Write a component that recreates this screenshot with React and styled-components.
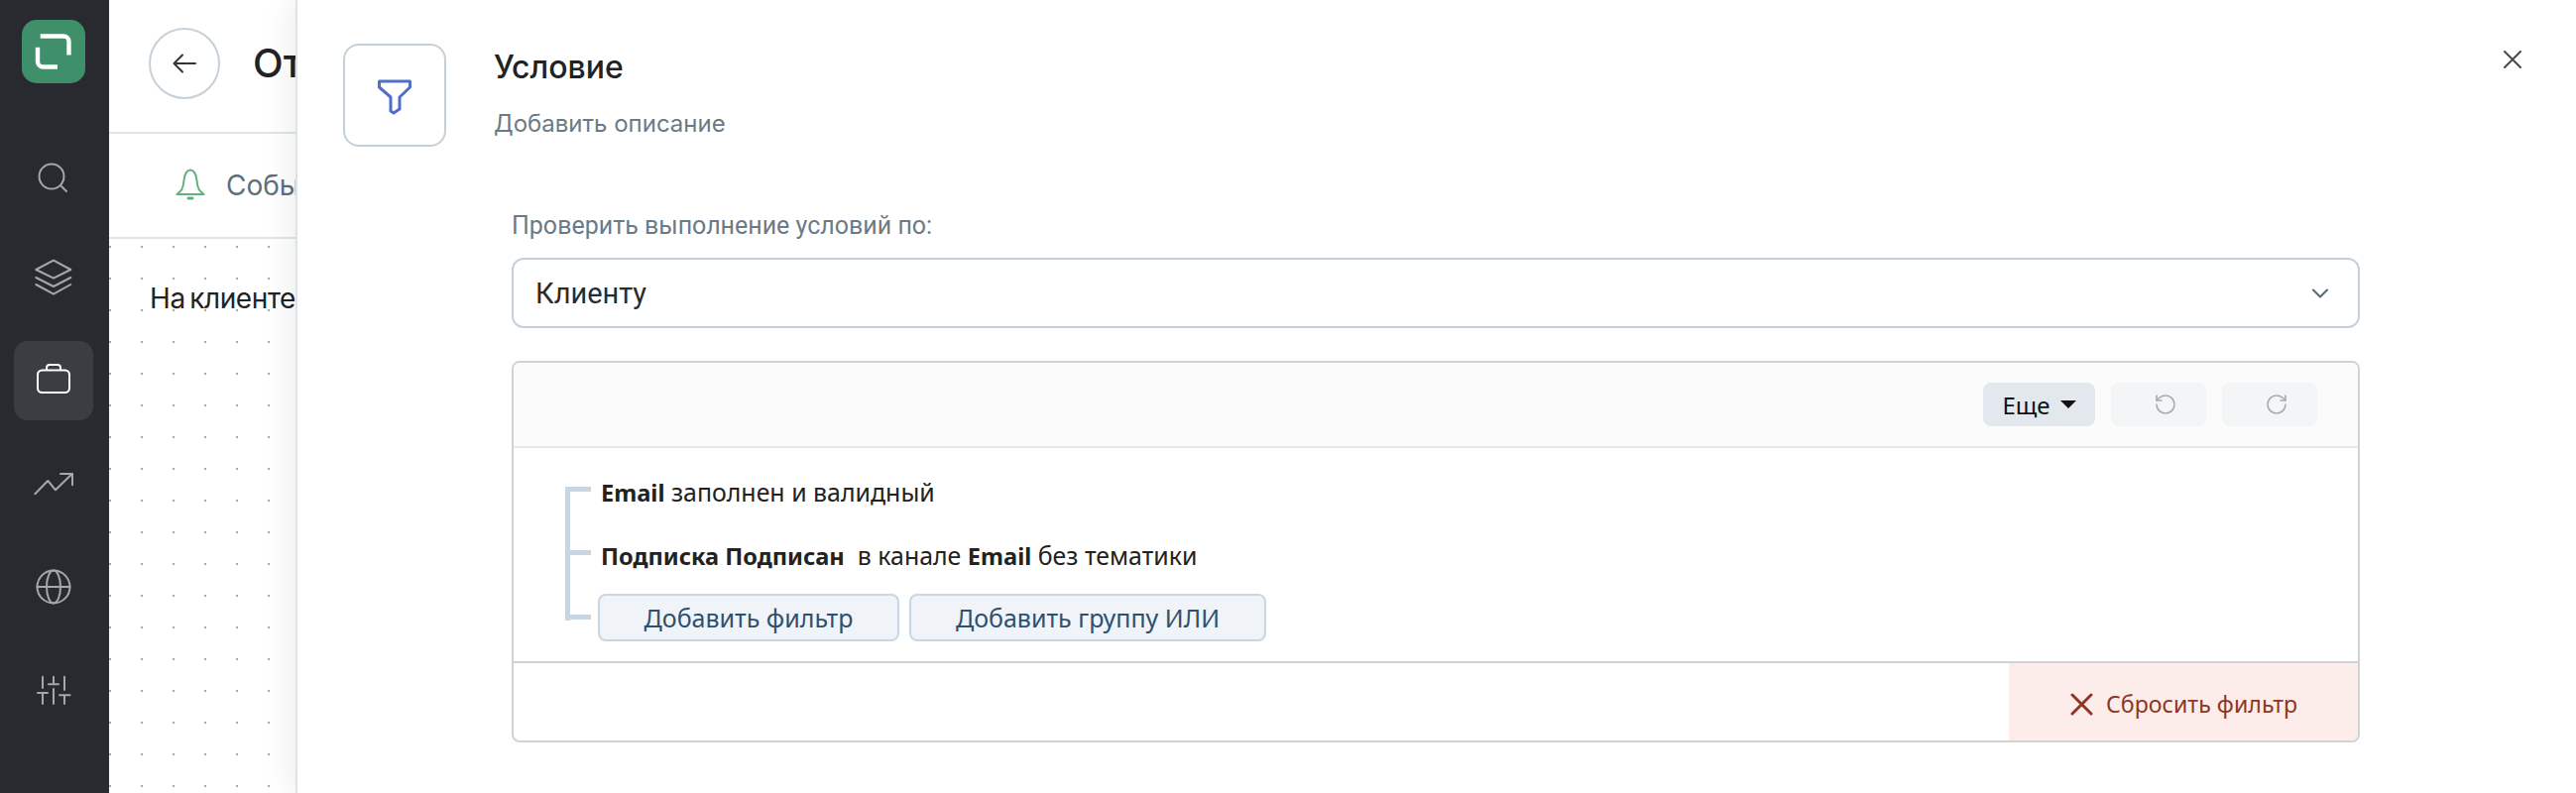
import React from 'react'
import styled, { createGlobalStyle } from 'styled-components'
import { ChevronDown, RotateCcw, RotateCw } from 'lucide-react'

const GlobalStyle = createGlobalStyle`
  html, body {
    margin: 0;
    height: 100%;
    overflow: hidden;
    background: #fff;
    font-family: Inter, "Noto Sans", sans-serif;
  }
`

const Shell = styled.div`
  position: relative;
  display: flex;
  width: 2598px;
  height: 800px;
  overflow: hidden;
`

const Sidebar = styled.nav`
  flex: none;
  width: 110px;
  padding: 20px 2px 0 0;
  background: #282a2f;
  display: flex;
  flex-direction: column;
  align-items: center;
  box-sizing: border-box;
`

const Logo = styled.div`
  width: 64px;
  height: 64px;
  margin-bottom: 52px;
  border-radius: 15px;
  background: #3f8f6b;
  display: flex;
`

const NavList = styled.div`
  display: flex;
  flex-direction: column;
  gap: 24px;
`

const NavItem = styled.div`
  width: 80px;
  height: 80px;
  border-radius: 14px;
  display: flex;
  align-items: center;
  justify-content: center;
  color: ${(p) => (p.$active ? '#ffffff' : '#a5a7aa')};
  background: ${(p) => (p.$active ? '#3a3d42' : 'transparent')};
`

const Page = styled.main`
  flex: 1;
  display: flex;
  flex-direction: column;
`

const PageHeader = styled.header`
  height: 127px;
  padding: 0 0 6px 40px;
  display: flex;
  align-items: center;
  gap: 33px;
  border-bottom: 2px solid #dde4e8;
`

const BackButton = styled.div`
  width: 72px;
  height: 72px;
  border-radius: 50%;
  border: 2px solid #c5d0d8;
  box-sizing: border-box;
  display: flex;
  align-items: center;
  justify-content: center;
  color: #333;
`

const PageTitle = styled.h1`
  margin: 0;
  font-size: 40px;
  font-weight: 500;
  color: #222;
  white-space: nowrap;
`

const Tabs = styled.div`
  height: 104px;
  padding-left: 62px;
  display: flex;
  align-items: center;
  gap: 16px;
  border-bottom: 2px solid #dde4e8;
`

const TabLabel = styled.span`
  font-size: 28px;
  color: #5f6f7a;
`

const Canvas = styled.section`
  flex: 1;
  padding: 43px 0 0 41px;
  font-size: 28px;
  letter-spacing: -0.4px;
  word-spacing: -3px;
  color: #222;
  background-image: radial-gradient(circle at 1px 1px, #a8a8a8 1px, transparent 1.3px);
  background-size: 32px 32px;
  background-position: 0 7px;
`

const Drawer = styled.aside`
  position: absolute;
  top: 0;
  left: 298px;
  right: 0;
  bottom: 0;
  background: #fff;
  border-left: 2px solid #dde4e8;
  box-shadow: -6px 0 28px rgba(0, 0, 0, 0.07);
  display: flex;
  flex-direction: column;
`

const DrawerHeader = styled.div`
  padding: 44px 0 0 46px;
  display: flex;
  gap: 48px;
`

const FilterBox = styled.div`
  width: 104px;
  height: 104px;
  padding-top: 3px;
  border: 2px solid #c5d0d8;
  border-radius: 16px;
  box-sizing: border-box;
  display: flex;
  align-items: center;
  justify-content: center;
`

const HeaderText = styled.div`
  display: flex;
  flex-direction: column;
`

const DrawerTitle = styled.h2`
  margin: 4px 0 0;
  font-size: 32px;
  line-height: 40px;
  font-weight: 500;
  color: #222;
`

const DrawerSubtitle = styled.p`
  margin: 22px 0 0;
  font-size: 24px;
  line-height: 30px;
  color: #6b7a85;
`

const CloseButton = styled.div`
  position: absolute;
  top: 50px;
  left: 2224px;
  color: #4a4a4e;
  display: flex;
`

const DrawerBody = styled.div`
  padding: 66px 218px 0 216px;
  display: flex;
  flex-direction: column;
`

const FieldLabel = styled.label`
  font-family: Roboto, sans-serif;
  font-size: 25px;
  line-height: 28px;
  color: #6b7a85;
`

const SelectBox = styled.div`
  margin-top: 18px;
  height: 71px;
  box-sizing: border-box;
  padding: 0 24px 0 22px;
  border: 2px solid #c5d0d8;
  border-radius: 12px;
  display: flex;
  align-items: center;
  justify-content: space-between;
  font-family: Roboto, sans-serif;
  font-size: 29px;
  color: #2b2b2b;

  svg {
    color: #5a6a75;
  }
`

const Builder = styled.div`
  margin-top: 33px;
  height: 385px;
  box-sizing: border-box;
  border: 2px solid #d2d2d2;
  border-radius: 8px;
  display: flex;
  flex-direction: column;
  overflow: hidden;
`

const BuilderToolbar = styled.div`
  height: 86px;
  flex: none;
  box-sizing: border-box;
  padding: 0 41px 0 0;
  background: #fbfbfb;
  border-bottom: 2px solid #e3e8ec;
  display: flex;
  align-items: center;
  justify-content: flex-end;
  gap: 16px;
`

const MoreButton = styled.div`
  width: 113px;
  height: 44px;
  border-radius: 8px;
  background: #e2e8ee;
  display: flex;
  align-items: center;
  justify-content: center;
  gap: 10px;
  font-family: "Noto Sans", sans-serif;
  font-size: 24px;
  color: #111;
`

const Caret = styled.span`
  width: 0;
  height: 0;
  border-left: 8px solid transparent;
  border-right: 8px solid transparent;
  border-top: 8px solid #111;
`

const HistoryButton = styled.div`
  width: 96px;
  height: 44px;
  padding-left: 14px;
  box-sizing: border-box;
  border-radius: 8px;
  background: #f3f5f6;
  display: flex;
  align-items: center;
  justify-content: center;
  color: #a9a9a9;
`

const Tree = styled.div`
  flex: 1;
  padding: 10px 0 11px 52px;
  font-family: "Noto Sans", sans-serif;
  font-size: 24.9px;
  color: #222;
`

const TreeRow = styled.div`
  height: ${(p) => (p.$tall ? 66 : 64)}px;
  display: flex;
  align-items: center;
`

const Connector = styled.span`
  position: relative;
  flex: none;
  align-self: stretch;
  width: 26px;

  &::before {
    content: '';
    position: absolute;
    left: 0;
    width: 5px;
    top: ${(p) => (p.$first ? 'calc(50% - 3px)' : '0')};
    bottom: ${(p) => (p.$last ? 'calc(50% - 3px)' : '0')};
    background: #c8d6e4;
  }

  &::after {
    content: '';
    position: absolute;
    left: 0;
    right: 0;
    top: calc(50% - 3px);
    height: 5px;
    background: #c8d6e4;
  }
`

const RuleText = styled.div`
  margin: 4px 0 0 10px;
  white-space: pre;

  b {
    font-size: 23.6px;
    font-weight: 700;
  }
`

const AddButtons = styled.div`
  margin-left: 7px;
  display: flex;
  gap: 10px;
`

const AddButton = styled.div`
  width: ${(p) => p.$width}px;
  height: 48px;
  box-sizing: border-box;
  border: 2px solid #c9d6e3;
  border-radius: 8px;
  background: #f0f4f8;
  display: flex;
  align-items: center;
  justify-content: center;
  font-size: 25px;
  color: #2f5070;
`

const BuilderFooter = styled.div`
  height: 79px;
  flex: none;
  border-top: 2px solid #d2d2d2;
  display: flex;
  justify-content: flex-end;
  font-family: "Noto Sans", sans-serif;
`

const ResetButton = styled.div`
  width: 352px;
  padding-top: 2px;
  box-sizing: border-box;
  background: #fcedea;
  color: #8f3524;
  font-size: 23.2px;
  display: flex;
  align-items: center;
  justify-content: center;
  gap: 13px;
`

const Icon = ({ children, size = 40, sw = 2, color = 'currentColor', vb = 40 }) => (
  <svg width={size} height={size} viewBox={`0 0 ${vb} ${vb}`} fill="none" stroke={color} strokeWidth={sw} strokeLinecap="round" strokeLinejoin="round">
    {children}
  </svg>
)

const navIcons = [
  <>
    <circle cx="18" cy="22" r="12.5" />
    <path d="M27 31l6 6" />
  </>,
  <>
    <path d="M20 2.7L37.3 12 20 20.7 2.3 12Z" />
    <path d="M2.3 20L20 29l17.3-9" />
    <path d="M2.3 27L20 36.7 37.3 27" />
  </>,
  <>
    <rect x="4" y="9.5" width="32" height="22.5" rx="4.5" />
    <path d="M13 9V7a3 3 0 0 1 3-3h8a3 3 0 0 1 3 3v2" />
  </>,
  <>
    <path d="M1.3 30.3L14.3 17 22 26.3 38.7 10" />
    <path d="M27 10H39V21.3" />
  </>,
  <>
    <circle cx="20" cy="20" r="16.5" />
    <ellipse cx="20" cy="20" rx="7" ry="16.5" />
    <path d="M3.5 20h33" />
  </>,
  <>
    <path d="M9 6.7V18M4 23H14M9 23V34" />
    <path d="M20 6.7V14.3M15 14.3H25M20 19V34" />
    <path d="M31 6.7V20M26 25.3H36.6M31 25.3V34" />
  </>,
]

const App = () => (
  <Shell>
    <GlobalStyle />
    <Sidebar>
      <Logo>
        <svg width="64" height="64" viewBox="0 0 64 64" fill="none" stroke="#fff" strokeWidth="4.4">
          <path d="M18.7 16.5H42a5.5 5.5 0 0 1 5.5 5.5V35.6" />
          <path d="M16 27.7V42a5.5 5.5 0 0 0 5.5 5.5H36" />
        </svg>
      </Logo>
      <NavList>
        {navIcons.map((icon, index) => (
          <NavItem key={index} $active={index === 2}>
            <Icon>{icon}</Icon>
          </NavItem>
        ))}
      </NavList>
    </Sidebar>

    <Page>
      <PageHeader>
        <BackButton>
          <Icon size={28} vb={28} sw={2}>
            <path d="M25 14H4M12 5.5L3.5 14l8.5 8.5" />
          </Icon>
        </BackButton>
        <PageTitle>От</PageTitle>
      </PageHeader>
      <Tabs>
        <Icon color="#63b27d">
          <path d="M6.5 29C10 26 13 24 13.5 15 14 8 17 4.5 20 4.5S26 8 26.5 15C27 24 30 26 33.5 29Z" />
          <path d="M18 33h4" strokeWidth="3" />
        </Icon>
        <TabLabel>Событие</TabLabel>
      </Tabs>
      <Canvas>На клиенте</Canvas>
    </Page>

    <Drawer>
      <DrawerHeader>
        <FilterBox>
          <Icon color="#5070c8" sw={3}>
            <path d="M4.5 4H35.5V10L25 20V32L19 36L16 34V20L4.5 10Z" />
          </Icon>
        </FilterBox>
        <HeaderText>
          <DrawerTitle>Условие</DrawerTitle>
          <DrawerSubtitle>Добавить описание</DrawerSubtitle>
        </HeaderText>
      </DrawerHeader>
      <CloseButton>
        <Icon size={20} vb={20} sw={2}>
          <path d="M2 2L18 18M18 2L2 18" />
        </Icon>
      </CloseButton>
      <DrawerBody>
        <FieldLabel>Проверить выполнение условий по:</FieldLabel>
        <SelectBox>
          Клиенту
          <ChevronDown size={28} strokeWidth={1.8} />
        </SelectBox>
        <Builder>
          <BuilderToolbar>
            <MoreButton>
              Еще
              <Caret />
            </MoreButton>
            <HistoryButton>
              <RotateCcw size={24} strokeWidth={1.6} />
            </HistoryButton>
            <HistoryButton>
              <RotateCw size={24} strokeWidth={1.6} />
            </HistoryButton>
          </BuilderToolbar>
          <Tree>
            <TreeRow>
              <Connector $first />
              <RuleText><b>Email</b> заполнен и валидный</RuleText>
            </TreeRow>
            <TreeRow>
              <Connector />
              <RuleText><b>Подписка Подписан</b>{'  '}в канале <b>Email</b> без тематики</RuleText>
            </TreeRow>
            <TreeRow $tall>
              <Connector $last />
              <AddButtons>
                <AddButton $width={304}>Добавить фильтр</AddButton>
                <AddButton $width={360}>Добавить группу ИЛИ</AddButton>
              </AddButtons>
            </TreeRow>
          </Tree>
          <BuilderFooter>
            <ResetButton>
              <Icon size={24} vb={24} sw={3}>
                <path d="M3 3L22 22M22 3L3 22" />
              </Icon>
              Сбросить фильтр
            </ResetButton>
          </BuilderFooter>
        </Builder>
      </DrawerBody>
    </Drawer>
  </Shell>
)

export default App
